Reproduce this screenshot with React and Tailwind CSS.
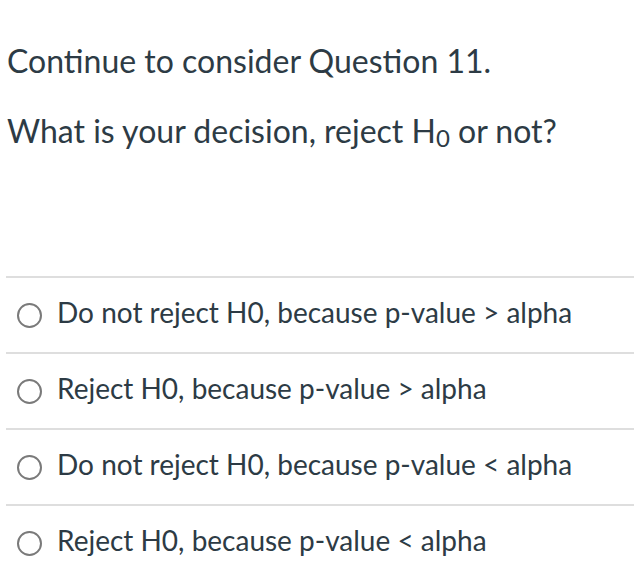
const options = [
  'Do not reject H0, because p-value > alpha',
  'Reject H0, because p-value > alpha',
  'Do not reject H0, because p-value < alpha',
  'Reject H0, because p-value < alpha',
];

function Option({ label }) {
  return (
    <label className="h-[76px] border-t-2 border-[#dedede] flex items-center pl-[11px] gap-[15px] cursor-pointer">
      <span className="w-[25px] h-[25px] rounded-full border-2 border-[#7a7a7a] flex-shrink-0" />
      <span className="text-[28px] leading-[34px] mb-[6px] text-[#2d3b45]">{label}</span>
    </label>
  );
}

export default function App() {
  return (
    <div className="min-h-screen bg-white font-['Lato',sans-serif] text-[#2d3b45]">
      <div className="pl-[7px] pt-[26px] text-[32px] leading-[70px]">
        <p>Continue to consider Question 11.</p>
        <p>
          What is your decision, reject H<sub className="text-[24px] bottom-[-4px]">0</sub> or not?
        </p>
      </div>
      <div className="ml-[6px] mt-[110px]">
        {options.map(o => (
          <Option key={o} label={o} />
        ))}
      </div>
    </div>
  );
}
